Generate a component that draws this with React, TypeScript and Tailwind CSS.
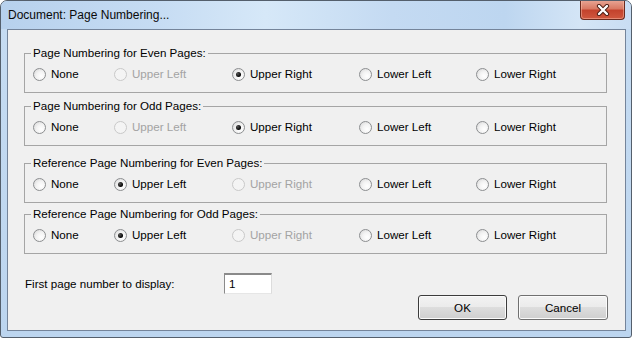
const font = { fontFamily: '"Liberation Sans", Arial, sans-serif' };

type Group = { title: string; sel: number; dis: number; mt: string };

const groups: Group[] = [
  { title: "Page Numbering for Even Pages:", sel: 2, dis: 1, mt: "mt-[16px]" },
  { title: "Page Numbering for Odd Pages:", sel: 2, dis: 1, mt: "mt-[6px]" },
  { title: "Reference Page Numbering for Even Pages:", sel: 1, dis: 2, mt: "mt-[10px]" },
  { title: "Reference Page Numbering for Odd Pages:", sel: 1, dis: 2, mt: "mt-[4px]" },
];

const options = ["None", "Upper Left", "Upper Right", "Lower Left", "Lower Right"];

function Radio({ checked, disabled }: { checked: boolean; disabled: boolean }) {
  return (
    <span
      className={`flex w-[13px] h-[13px] shrink-0 items-center justify-center rounded-full border ${
        disabled
          ? "border-[#c9c9c9] bg-[#f4f4f4]"
          : "border-[#8c8e90] bg-[radial-gradient(circle_at_65%_65%,#ffffff_0%,#f3f3f3_45%,#d4d4d4_100%)]"
      }`}
    >
      {checked && <span className="w-[5px] h-[5px] rounded-full bg-[radial-gradient(circle_at_35%_35%,#555_0%,#000_70%)]" />}
    </span>
  );
}

function CloseGlyph() {
  return (
    <svg width="14" height="12" viewBox="0 0 14 12">
      <path d="M3 2 L11 10 M11 2 L3 10" stroke="#4a1b12" strokeWidth="4.2" strokeLinecap="round" />
      <path d="M3 2 L11 10 M11 2 L3 10" stroke="#ffffff" strokeWidth="2.4" strokeLinecap="round" />
    </svg>
  );
}

export default function App() {
  return (
    <div
      className="w-[632px] h-[338px] flex flex-col rounded-t-[7px] rounded-b-[3px] border border-[#545f6c] bg-[linear-gradient(180deg,#c6dcf2_0%,#bcd5ef_100%)] overflow-hidden text-[11.6px] text-black"
      style={font}
    >
      {/* Title bar */}
      <div className="h-[28px] flex justify-between pl-[7px] pr-[6px] text-[12px] bg-[linear-gradient(90deg,#b7d1ed_0%,#c6dcf3_25%,#d6e8f8_42%,#c4daf2_62%,#bdd6f0_80%,#d4e5f6_92%,#c9ddf3_100%)]">
        <span className="self-center text-[#0a0a0a]">Document: Page Numbering...</span>
        <div className="-mt-px w-[45px] h-[20px] flex items-center justify-center rounded-b-[4px] border border-t-0 border-[#6b2a1e] bg-[linear-gradient(180deg,#e9a897_0%,#d97a64_45%,#c4432d_55%,#d0583f_100%)] shadow-[inset_0_0_0_1px_rgba(255,200,180,0.45)]">
          <CloseGlyph />
        </div>
      </div>

      {/* Client area */}
      <div className="flex-1 flex pl-[6px] pr-[5px] pb-[6px]">
        <div className="flex-1 flex flex-col border border-[#74849a] bg-[#f0f0f0]">
          {groups.map((g) => (
            <fieldset key={g.title} className={`${g.mt} ml-[16px] mr-[18px] border border-[#a5a5a5]`}>
              <legend className="ml-[6px] px-[2px] leading-[14px]">{g.title}</legend>
              <div className="grid grid-cols-[81px_118px_127px_117px_1fr] pl-[8px] pt-[7px] pb-[11px]">
                {options.map((o, i) => (
                  <div key={o} className="flex items-center gap-[5px] h-[14px] leading-[14px]">
                    <Radio checked={i === g.sel} disabled={i === g.dis} />
                    <span className={i === g.dis ? "text-[#a3a3a3]" : ""}>{o}</span>
                  </div>
                ))}
              </div>
            </fieldset>
          ))}

          <div className="mt-[19px] ml-[17px] flex items-center">
            <span className="w-[199px]">First page number to display:</span>
            <div className="w-[48px] h-[21px] flex items-center pl-[4px] bg-white border-t-2 border-l border-r border-b border-t-[#8a8a8a] border-l-[#8a8a8a] border-r-[#dcdcdc] border-b-[#e6e6e6]">
              1
            </div>
          </div>

          <div className="mt-px pr-[17px] flex justify-end gap-[11px]">
            <button className="w-[89px] h-[25px] rounded-[3px] border border-[#3c3c3c] shadow-[inset_0_0_0_1px_#fbfbfb] bg-[linear-gradient(180deg,#f2f2f2_0%,#ebebeb_50%,#dddddd_50%,#cfcfcf_100%)]">
              OK
            </button>
            <button className="w-[90px] h-[25px] rounded-[3px] border border-[#707070] shadow-[inset_0_0_0_1px_#fbfbfb] bg-[linear-gradient(180deg,#f2f2f2_0%,#ebebeb_50%,#dddddd_50%,#cfcfcf_100%)]">
              Cancel
            </button>
          </div>
        </div>
      </div>
    </div>
  );
}
